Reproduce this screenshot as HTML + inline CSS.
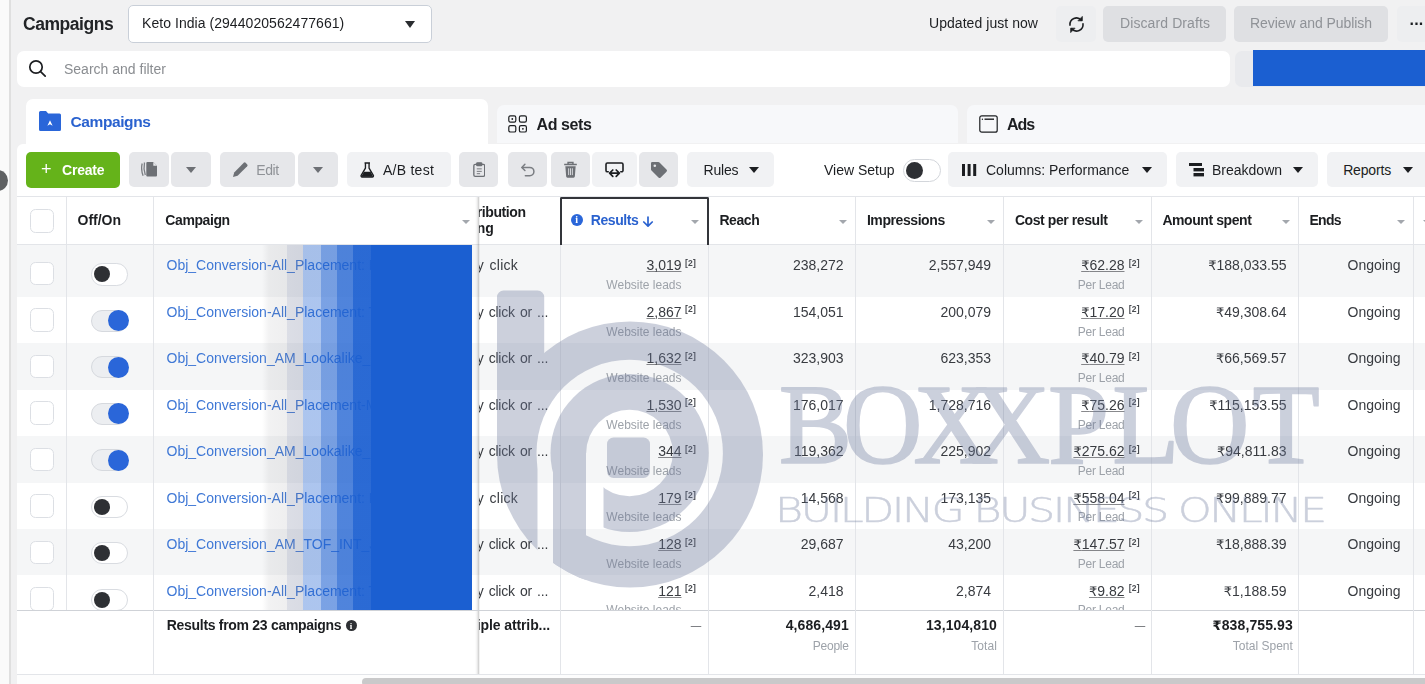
<!DOCTYPE html>
<html lang="en">
<head>
<meta charset="utf-8">
<title>Campaigns</title>
<style>
*{box-sizing:border-box;margin:0;padding:0}
html,body{width:1425px;height:684px;overflow:hidden}
body{background:#f1f1f2;font-family:"Liberation Sans","DejaVu Sans",sans-serif;font-size:14px;color:#1c1e21;position:relative}
#root{position:absolute;left:0;top:0;width:1425px;height:684px;overflow:hidden;opacity:.999;will-change:opacity}
.abs{position:absolute}
.t{position:absolute;white-space:nowrap;line-height:1}
.b{font-weight:bold}
.ru{font-family:"DejaVu Sans",sans-serif;font-size:.93em}
u{text-decoration:underline;text-underline-offset:1px;text-decoration-thickness:1px;text-decoration-color:rgba(56,59,64,.6)}
/* left gutter */
#gut{left:0;top:0;width:11px;height:684px;background:#fafafa;border-right:2px solid #dfdfdf}
#knob{left:-13px;top:170px;width:21px;height:21px;border-radius:50%;background:#5f6163}
/* top bar */
#sel{left:128px;top:5.300px;width:304px;height:37.300px;background:#fff;border:1px solid #c9cfd8;border-radius:5px}
.btn{position:absolute;border-radius:5px;background:#e6e7ea}
.btn.dis{background:#dfe0e3}
.caret{position:absolute;width:0;height:0;border-left:5px solid transparent;border-right:5px solid transparent;border-top:6px solid #1c1e21}
/* search */
#search{left:17px;top:51px;width:1213px;height:36px;background:#fff;border-radius:7px}
#sbox2{left:1235px;top:51px;width:200px;height:36px;background:#e9eaed;border-radius:7px}
#blue{left:1253px;top:50px;width:172px;height:36px;background:#1b5fd1}
/* tabs */
.tab{position:absolute;border-radius:7px 7px 0 0}
#tab1{left:26px;top:99px;width:462px;height:50px;background:#fff}
#tab2{left:497px;top:105px;width:461px;height:38px;background:#f7f8fa}
#tab3{left:967px;top:105px;width:470px;height:38px;background:#f7f8fa}
#panel{left:17px;top:144px;width:1410px;height:540px;background:#fff;border-radius:6px 0 0 0}
</style>
</head>
<body>
<div id="root">
<div class="abs" id="gut"></div>
<div class="abs" id="knob"></div>

<!-- top bar -->
<div class="t b" style="left:23px;top:15.600px;font-size:17.500px;letter-spacing:-0.45px;color:#222427">Campaigns</div>
<div class="abs" id="sel">
  <div class="t" style="left:13px;top:9.900px;font-size:14px;letter-spacing:0.05px">Keto India (2944020562477661)</div>
  <div class="caret" style="left:275.700px;top:14.600px;border-left-width:5.300px;border-right-width:5.300px;border-top-width:7px;border-top-color:#2a2c30"></div>
</div>
<div class="t" style="left:929px;top:16.300px;font-size:14px;letter-spacing:0.05px">Updated just now</div>
<div class="btn" style="left:1056px;top:6px;width:40px;height:36px;background:#edeef0">
  <svg class="abs" style="left:10.500px;top:8.500px" width="19" height="19" viewBox="0 0 19 19" fill="none" stroke="#1c1e21" stroke-width="1.600" stroke-linecap="round"><path d="M3 10.200A6.500 6.500 0 0 1 14.300 5.200"/><path d="M16 8.800A6.500 6.500 0 0 1 4.700 13.800"/><path d="M15.300 1.800v4h-4z" fill="#1c1e21" stroke-width=".8" stroke-linejoin="round"/><path d="M3.700 17.200v-4h4z" fill="#1c1e21" stroke-width=".8" stroke-linejoin="round"/></svg>
</div>
<div class="btn dis" style="left:1103px;top:6px;width:123px;height:36px"><div class="t" style="left:17px;top:10.300px;font-size:14px;color:#8f9297;letter-spacing:0.1px">Discard Drafts</div></div>
<div class="btn dis" style="left:1234px;top:6px;width:154px;height:36px"><div class="t" style="left:16px;top:10.300px;font-size:14px;color:#8f9297;letter-spacing:-0.05px">Review and Publish</div></div>
<div class="btn" style="left:1397px;top:6px;width:40px;height:36px;background:#edeef0"><div class="t b" style="left:12.500px;top:5.800px;font-size:16px;letter-spacing:0.2px">...</div></div>

<!-- search row -->
<div class="abs" id="search">
  <svg class="abs" style="left:11px;top:8.400px" width="20" height="20" viewBox="0 0 20 20" fill="none" stroke="#1c1e21" stroke-width="1.7" stroke-linecap="round"><circle cx="8" cy="8" r="6.2"/><path d="M12.6 12.6l4.6 4.6"/></svg>
  <div class="t" style="left:47px;top:10.500px;font-size:14px;color:#8a8d91;letter-spacing:0px">Search and filter</div>
</div>
<div class="abs" id="sbox2"></div>
<div class="abs" id="blue"></div>

<!-- tabs -->
<div class="tab" id="tab1"></div>
<div class="tab" id="tab2"></div>
<div class="tab" id="tab3"></div>
<div class="abs" id="panel"></div>

<svg class="abs" style="left:39px;top:111px" width="22" height="20" viewBox="0 0 22 20"><path d="M1.5 0H7l2.2 2.6H20.5A1.5 1.5 0 0 1 22 4.1V18.5A1.5 1.5 0 0 1 20.5 20H1.5A1.5 1.5 0 0 1 0 18.5V1.5A1.5 1.5 0 0 1 1.5 0Z" fill="#2a66d9"/><path d="M11 9.2l2.6 5.6-2.6-1.5-2.6 1.5z" fill="#fff"/></svg>
<div class="t b" style="top:114.2px;font-size:15.5px;left:70.5px;color:#2a62cf;letter-spacing:-0.4px;">Campaigns</div>
<svg class="abs" style="left:508px;top:115px" width="20" height="18" viewBox="0 0 20 18" fill="none" stroke="#1c1e21" stroke-width="1.2"><rect x=".8" y=".8" width="7" height="6.4" rx="1.6"/><rect x="11.4" y=".8" width="7" height="6.4" rx="1.6"/><rect x=".8" y="10.6" width="7" height="6.4" rx="1.6"/><rect x="11.4" y="10.6" width="7" height="6.4" rx="1.6"/><circle cx="4.3" cy="4" r=".9" fill="#1c1e21" stroke="none"/><circle cx="14.9" cy="13.8" r=".9" fill="#1c1e21" stroke="none"/></svg>
<div class="t b" style="top:116.5px;font-size:16px;left:536.5px;color:#1c1e21;letter-spacing:-0.4px;">Ad sets</div>
<svg class="abs" style="left:979px;top:115px" width="19" height="18" viewBox="0 0 19 18" fill="none" stroke="#1c1e21" stroke-width="1.2"><rect x=".8" y=".8" width="17.4" height="16.4" rx="2"/><path d="M5.5 4.2h9.5" stroke-width="1.4"/><circle cx="3.4" cy="4.2" r=".7" fill="#1c1e21" stroke="none"/></svg>
<div class="t b" style="top:116.5px;font-size:16px;left:1007.0px;color:#1c1e21;letter-spacing:-1.0px;">Ads</div>

<div class="btn" style="left:26px;top:152px;width:94px;height:36px;background:#65b31a"></div>
<div class="t" style="top:160.3px;font-size:18px;left:41.0px;color:#fff;">+</div>
<div class="t b" style="top:163.1px;font-size:14px;left:62.0px;color:#fff;letter-spacing:-0.2px;">Create</div>
<div class="btn" style="left:129px;top:152px;width:39.5px;height:35.2px;background:#e6e7ea"><svg class="abs" style="left:12px;top:9px" width="17" height="17" viewBox="0 0 17 17"><path d="M1.2 2.5c-.9 3.5-.9 7.5.9 12.2" fill="none" stroke="#7b7e83" stroke-width="1.3"/><path d="M3.5 1.5c-.8 3.8-.6 8 .8 12.5" fill="none" stroke="#7b7e83" stroke-width="1.3"/><path d="M6.3 1h6l3.7 3.7v9.8a1 1 0 0 1-1 1H6.3a1 1 0 0 1-1-1V2a1 1 0 0 1 1-1z" fill="#6d7075"/><path d="M12.3 1v3.7H16z" fill="#e6e7ea"/></svg></div>
<div class="btn" style="left:171px;top:152px;width:39.5px;height:35.2px;background:#e6e7ea"></div>
<div class="abs" style="left:186px;top:166.5px;width:0;height:0;border-left:5.0px solid transparent;border-right:5.0px solid transparent;border-top:6px solid #6d7075"></div>
<div class="btn" style="left:220px;top:152px;width:75px;height:35.2px;background:#e6e7ea"><svg class="abs" style="left:12px;top:9px" width="17" height="17" viewBox="0 0 17 17"><path d="M1 16l1.2-4.6L11.8 1.8a1.3 1.3 0 0 1 1.8 0l1.6 1.6a1.3 1.3 0 0 1 0 1.8L5.6 14.8z" fill="#6d7075"/></svg></div>
<div class="t" style="top:163.1px;font-size:14px;left:256.2px;color:#8f9297;letter-spacing:-0.4px;">Edit</div>
<div class="btn" style="left:298px;top:152px;width:40px;height:35.2px;background:#e6e7ea"></div>
<div class="abs" style="left:313px;top:166.5px;width:0;height:0;border-left:5.0px solid transparent;border-right:5.0px solid transparent;border-top:6px solid #6d7075"></div>
<div class="btn" style="left:347px;top:152px;width:104px;height:35.2px;background:#f1f2f4"><svg class="abs" style="left:13px;top:9.500px" width="14.500" height="16" viewBox="0 0 16 17"><path d="M5 .8h6M6 .8v5.6L1.3 14.4a1.2 1.2 0 0 0 1 1.8h11.4a1.2 1.2 0 0 0 1-1.8L10 6.4V.8" fill="none" stroke="#1c1e21" stroke-width="1.5" stroke-linejoin="round"/><path d="M4.4 10.5h7.2l2.6 4.6a.6.6 0 0 1-.5.9H2.3a.6.6 0 0 1-.5-.9z" fill="#1c1e21"/></svg></div>
<div class="t" style="top:163.1px;font-size:14px;left:383.0px;color:#1c1e21;letter-spacing:0.25px;">A/B test</div>
<div class="btn" style="left:459px;top:152px;width:39px;height:35.2px;background:#e6e7ea"><svg class="abs" style="left:13.800px;top:10.300px" width="12.500" height="15.400" viewBox="0 0 15 18" fill="none" stroke="#6d7075" stroke-width="1.600"><rect x="1" y="2.6" width="13" height="14.4" rx="1.6"/><rect x="4.5" y=".8" width="6" height="3.4" rx=".8" fill="#6d7075"/><path d="M4.5 8h6M4.5 11h6M4.5 13.8h4" stroke-width="1.1"/></svg></div>
<div class="btn" style="left:508px;top:152px;width:39px;height:35.2px;background:#e6e7ea"><svg class="abs" style="left:11.500px;top:11px" width="16" height="15" viewBox="0 0 18 17" fill="none" stroke="#7a7d82" stroke-width="1.700" stroke-linecap="round" stroke-linejoin="round"><path d="M5.5 1.5L2 5l3.5 3.5"/><path d="M2.5 5H11a4.7 4.7 0 0 1 0 9.4H6"/></svg></div>
<div class="btn" style="left:551px;top:152px;width:39px;height:35.2px;background:#e6e7ea"><svg class="abs" style="left:12px;top:9px" width="15" height="17.500" viewBox="0 0 15 18"><path d="M1 3.6h13M5 3.4V1.5h5v1.9" fill="none" stroke="#6d7075" stroke-width="1.5"/><path d="M2.2 5.4h10.6l-.8 10.4a1.4 1.4 0 0 1-1.4 1.3H4.4A1.4 1.4 0 0 1 3 15.8z" fill="#6d7075"/><path d="M5.6 7.5v7M7.5 7.5v7M9.4 7.5v7" stroke="#e6e7ea" stroke-width=".9"/></svg></div>
<div class="btn" style="left:592px;top:152px;width:45px;height:35.2px;background:#f1f2f4"><svg class="abs" style="left:13px;top:9.500px" width="19" height="17" viewBox="0 0 19 17" fill="none" stroke="#1c1e21" stroke-width="1.600" stroke-linejoin="round" stroke-linecap="round"><path d="M3.200 9.800H2.400A1.400 1.400 0 0 1 1 8.400V2.400A1.400 1.400 0 0 1 2.400 1h14.200A1.400 1.400 0 0 1 18 2.400v6a1.400 1.400 0 0 1-1.400 1.400h-.8"/><path d="M7.800 8L4.600 11.200l3.200 3.200M5 11.200h9M11.200 8l3.200 3.200-3.200 3.200" stroke-width="1.700"/></svg></div>
<div class="btn" style="left:639px;top:152px;width:39px;height:35.2px;background:#e6e7ea"><svg class="abs" style="left:11px;top:9px" width="18" height="18" viewBox="0 0 18 18"><path d="M1 2.2A1.2 1.2 0 0 1 2.2 1h6.2a1.6 1.6 0 0 1 1.1.5l7 7a1.6 1.6 0 0 1 0 2.2l-5.800 5.8a1.6 1.6 0 0 1-2.2 0l-7-7A1.6 1.6 0 0 1 1 8.400z" fill="#6d7075"/><circle cx="4.800" cy="4.800" r="1.300" fill="#e6e7ea"/></svg></div>
<div class="btn" style="left:687px;top:152px;width:87px;height:35.2px;background:#f1f2f4"></div>
<div class="t" style="top:163.1px;font-size:14px;left:703.5px;color:#1c1e21;letter-spacing:-0.2px;">Rules</div>
<div class="abs" style="left:749px;top:166.5px;width:0;height:0;border-left:5.75px solid transparent;border-right:5.75px solid transparent;border-top:6.5px solid #1c1e21"></div>
<div class="t" style="top:163.1px;font-size:14px;left:824.0px;color:#1c1e21;">View Setup</div>
<div class="abs" style="left:903px;top:158.500px;width:38px;height:23px;border-radius:12px;background:#fff;border:1px solid #d3d6db"></div>
<div class="abs" style="left:905.5px;top:161.500px;width:17px;height:17px;border-radius:50%;background:#2e3034"></div>
<div class="btn" style="left:948px;top:152px;width:219px;height:35.2px;background:#f1f2f4"></div>
<div class="abs" style="left:961.500px;top:163.500px;width:3.600px;height:12px;background:#1c1e21;box-shadow:5.600px 0 0 #1c1e21,11.200px 0 0 #1c1e21"></div>
<div class="t" style="top:163.1px;font-size:14px;left:986.0px;color:#1c1e21;">Columns: Performance</div>
<div class="abs" style="left:1141.5px;top:166.5px;width:0;height:0;border-left:5.75px solid transparent;border-right:5.75px solid transparent;border-top:6.5px solid #1c1e21"></div>
<div class="btn" style="left:1176px;top:152px;width:142px;height:35.2px;background:#f1f2f4"><svg class="abs" style="left:12.500px;top:10.500px" width="15" height="14" viewBox="0 0 15 14" fill="#1c1e21"><rect x="0" y="0" width="13" height="3"/><rect x="4.500" y="5" width="10.500" height="3.400"/><rect x="4.500" y="10" width="10.500" height="3.400"/></svg></div>
<div class="t" style="top:163.1px;font-size:14px;left:1212.0px;color:#1c1e21;">Breakdown</div>
<div class="abs" style="left:1292.5px;top:166.5px;width:0;height:0;border-left:5.75px solid transparent;border-right:5.75px solid transparent;border-top:6.5px solid #1c1e21"></div>
<div class="btn" style="left:1327px;top:152px;width:113px;height:35.2px;background:#f1f2f4"></div>
<div class="t" style="top:163.1px;font-size:14px;left:1343.2px;color:#1c1e21;letter-spacing:-0.18px;">Reports</div>
<div class="abs" style="left:1402.5px;top:166.5px;width:0;height:0;border-left:5.75px solid transparent;border-right:5.75px solid transparent;border-top:6.5px solid #1c1e21"></div>

<div class="abs" style="left:17px;top:245px;width:1410px;height:51.67px;background:#f5f6f7"></div>
<div class="abs" style="left:17px;top:343.14px;width:1410px;height:46.47px;background:#f5f6f7"></div>
<div class="abs" style="left:17px;top:436.08px;width:1410px;height:46.47px;background:#f5f6f7"></div>
<div class="abs" style="left:17px;top:529.02px;width:1410px;height:46.47px;background:#f5f6f7"></div>
<div class="abs" style="left:17px;top:196px;width:1410px;height:1px;background:#e3e5e9"></div>
<div class="abs" style="left:17px;top:244px;width:1410px;height:1px;background:#e3e5e9"></div>
<div class="abs" style="left:66.0px;top:196px;width:1px;height:414px;background:#e3e5e9"></div>
<div class="abs" style="left:153.0px;top:196px;width:1px;height:478px;background:#e3e5e9"></div>
<div class="abs" style="left:560.0px;top:196px;width:1px;height:478px;background:#e3e5e9"></div>
<div class="abs" style="left:708.0px;top:196px;width:1px;height:478px;background:#e3e5e9"></div>
<div class="abs" style="left:855.0px;top:196px;width:1px;height:478px;background:#e3e5e9"></div>
<div class="abs" style="left:1003.0px;top:196px;width:1px;height:478px;background:#e3e5e9"></div>
<div class="abs" style="left:1151.0px;top:196px;width:1px;height:478px;background:#e3e5e9"></div>
<div class="abs" style="left:1298.0px;top:196px;width:1px;height:478px;background:#e3e5e9"></div>
<div class="abs" style="left:1413.0px;top:196px;width:1px;height:478px;background:#e3e5e9"></div>
<div class="t b" style="top:213.1px;font-size:14px;left:77.5px;">Off/On</div>
<div class="t b" style="top:213.1px;font-size:14px;left:165.3px;letter-spacing:-0.4px;">Campaign</div>
<div class="t b" style="top:213.1px;font-size:14px;left:719.4px;letter-spacing:-0.42px;">Reach</div>
<div class="abs" style="left:839.0px;top:219.5px;width:0;height:0;border-left:4.25px solid transparent;border-right:4.25px solid transparent;border-top:4.5px solid #a3a7ad"></div>
<div class="t b" style="top:213.1px;font-size:14px;left:866.9px;letter-spacing:-0.42px;">Impressions</div>
<div class="abs" style="left:986.5px;top:219.5px;width:0;height:0;border-left:4.25px solid transparent;border-right:4.25px solid transparent;border-top:4.5px solid #a3a7ad"></div>
<div class="t b" style="top:213.1px;font-size:14px;left:1014.9px;letter-spacing:-0.42px;">Cost per result</div>
<div class="abs" style="left:1135.0px;top:219.5px;width:0;height:0;border-left:4.25px solid transparent;border-right:4.25px solid transparent;border-top:4.5px solid #a3a7ad"></div>
<div class="t b" style="top:213.1px;font-size:14px;left:1162.4px;letter-spacing:-0.42px;">Amount spent</div>
<div class="abs" style="left:1281.5px;top:219.5px;width:0;height:0;border-left:4.25px solid transparent;border-right:4.25px solid transparent;border-top:4.5px solid #a3a7ad"></div>
<div class="t b" style="top:213.1px;font-size:14px;left:1309.4px;letter-spacing:-0.7px;">Ends</div>
<div class="abs" style="left:1396.5px;top:219.5px;width:0;height:0;border-left:4.25px solid transparent;border-right:4.25px solid transparent;border-top:4.5px solid #a3a7ad"></div>
<div class="abs" style="left:462px;top:219.5px;width:0;height:0;border-left:4.25px solid transparent;border-right:4.25px solid transparent;border-top:4.5px solid #a3a7ad"></div>
<div class="abs" style="left:1423px;top:219.5px;width:0;height:0;border-left:4.25px solid transparent;border-right:4.25px solid transparent;border-top:4.5px solid #a3a7ad"></div>
<div class="abs" style="left:560px;top:197px;width:149px;height:48px;border:2px solid #33353a;border-bottom:0;border-radius:2px 2px 0 0"></div>
<div class="abs" style="left:570.500px;top:213.500px;width:12.500px;height:12.500px;border-radius:50%;background:#2a66d9"></div>
<div class="t b" style="top:215.1px;font-size:10px;left:575.3px;color:#fff;font-family:'Liberation Serif',serif;">i</div>
<div class="t b" style="top:213.1px;font-size:14px;left:590.8px;color:#2a62cf;letter-spacing:-0.45px;">Results</div>
<svg class="abs" style="left:641.500px;top:213px" width="12" height="14" viewBox="0 0 12 14" fill="none" stroke="#2a62cf" stroke-width="1.700" stroke-linecap="round" stroke-linejoin="round"><path d="M6 4v8.800M1.800 9L6 13.200l4.200-4.200"/></svg>
<div class="abs" style="left:691px;top:219.5px;width:0;height:0;border-left:4.25px solid transparent;border-right:4.25px solid transparent;border-top:4.5px solid #a3a7ad"></div>
<div class="abs" style="left:30px;top:209.1px;width:24px;height:23.500px;border:1px solid #dcdfe4;border-radius:5.500px;background:#fff"></div>
<div class="abs" style="left:30px;top:261.7px;width:24px;height:23.500px;border:1px solid #dcdfe4;border-radius:5.500px;background:#fff"></div>
<div class="abs" style="left:90.500px;top:263.2px;width:37.500px;height:22.400px;border-radius:11.200px;background:#fff;border:1px solid #d9dce1"></div>
<div class="abs" style="left:93.500px;top:266.2px;width:16px;height:16px;border-radius:50%;background:#2e3034"></div>
<div class="t" style="top:258.3px;font-size:14px;left:166.5px;color:#3f78d6;">Obj_Conversion-All_Placement: M</div>
<div class="t" style="top:258.3px;font-size:14px;left:476.7px;color:#383b40;letter-spacing:0.25px;word-spacing:1.500px;clip-path:inset(-6px -6px -6px 2.300px);">y click</div>
<div class="t" style="top:258.3px;font-size:14px;right:743.5px;color:#383b40;"><u>3,019</u></div>
<div class="t b" style="top:258.8px;font-size:8.5px;left:685.0px;color:#4a4d52;letter-spacing:0.2px;">[2]</div>
<div class="t" style="top:279.0px;font-size:12px;right:743.5px;color:#9da2a9;">Website leads</div>
<div class="t" style="top:258.3px;font-size:14px;right:581.5px;color:#383b40;">238,272</div>
<div class="t" style="top:258.3px;font-size:14px;right:434.0px;color:#383b40;">2,557,949</div>
<div class="t" style="top:258.3px;font-size:14px;right:300.5px;color:#383b40;"><u><span class="ru">&#8377;</span>62.28</u></div>
<div class="t b" style="top:258.8px;font-size:8.5px;left:1128.8px;color:#4a4d52;letter-spacing:0.2px;">[2]</div>
<div class="t" style="top:279.0px;font-size:12px;right:300.5px;color:#9da2a9;letter-spacing:-0.25px;">Per Lead</div>
<div class="t" style="top:258.3px;font-size:14px;right:138.5px;color:#383b40;"><span class="ru">&#8377;</span>188,033.55</div>
<div class="t" style="top:258.3px;font-size:14px;right:24.5px;color:#383b40;">Ongoing</div>
<div class="abs" style="left:30px;top:308.2px;width:24px;height:23.500px;border:1px solid #dcdfe4;border-radius:5.500px;background:#fff"></div>
<div class="abs" style="left:90.500px;top:309.7px;width:37.500px;height:22.400px;border-radius:11.200px;background:#eceef1;border:1px solid #d6d9de"></div>
<div class="abs" style="left:107.500px;top:310.2px;width:21px;height:21px;border-radius:50%;background:#2a66d9"></div>
<div class="t" style="top:304.8px;font-size:14px;left:166.5px;color:#3f78d6;">Obj_Conversion-All_Placement: T</div>
<div class="t" style="top:304.8px;font-size:14px;left:476.7px;color:#383b40;letter-spacing:-0.22px;word-spacing:1.500px;clip-path:inset(-6px -6px -6px 2.300px);">y click or ...</div>
<div class="t" style="top:304.8px;font-size:14px;right:743.5px;color:#383b40;"><u>2,867</u></div>
<div class="t b" style="top:305.3px;font-size:8.5px;left:685.0px;color:#4a4d52;letter-spacing:0.2px;">[2]</div>
<div class="t" style="top:325.5px;font-size:12px;right:743.5px;color:#9da2a9;">Website leads</div>
<div class="t" style="top:304.8px;font-size:14px;right:581.5px;color:#383b40;">154,051</div>
<div class="t" style="top:304.8px;font-size:14px;right:434.0px;color:#383b40;">200,079</div>
<div class="t" style="top:304.8px;font-size:14px;right:300.5px;color:#383b40;"><u><span class="ru">&#8377;</span>17.20</u></div>
<div class="t b" style="top:305.3px;font-size:8.5px;left:1128.8px;color:#4a4d52;letter-spacing:0.2px;">[2]</div>
<div class="t" style="top:325.5px;font-size:12px;right:300.5px;color:#9da2a9;letter-spacing:-0.25px;">Per Lead</div>
<div class="t" style="top:304.8px;font-size:14px;right:138.5px;color:#383b40;"><span class="ru">&#8377;</span>49,308.64</div>
<div class="t" style="top:304.8px;font-size:14px;right:24.5px;color:#383b40;">Ongoing</div>
<div class="abs" style="left:30px;top:354.6px;width:24px;height:23.500px;border:1px solid #dcdfe4;border-radius:5.500px;background:#fff"></div>
<div class="abs" style="left:90.500px;top:356.1px;width:37.500px;height:22.400px;border-radius:11.200px;background:#eceef1;border:1px solid #d6d9de"></div>
<div class="abs" style="left:107.500px;top:356.6px;width:21px;height:21px;border-radius:50%;background:#2a66d9"></div>
<div class="t" style="top:351.3px;font-size:14px;left:166.5px;color:#3f78d6;">Obj_Conversion_AM_Lookalike_I</div>
<div class="t" style="top:351.3px;font-size:14px;left:476.7px;color:#383b40;letter-spacing:-0.22px;word-spacing:1.500px;clip-path:inset(-6px -6px -6px 2.300px);">y click or ...</div>
<div class="t" style="top:351.3px;font-size:14px;right:743.5px;color:#383b40;"><u>1,632</u></div>
<div class="t b" style="top:351.7px;font-size:8.5px;left:685.0px;color:#4a4d52;letter-spacing:0.2px;">[2]</div>
<div class="t" style="top:372.0px;font-size:12px;right:743.5px;color:#9da2a9;">Website leads</div>
<div class="t" style="top:351.3px;font-size:14px;right:581.5px;color:#383b40;">323,903</div>
<div class="t" style="top:351.3px;font-size:14px;right:434.0px;color:#383b40;">623,353</div>
<div class="t" style="top:351.3px;font-size:14px;right:300.5px;color:#383b40;"><u><span class="ru">&#8377;</span>40.79</u></div>
<div class="t b" style="top:351.7px;font-size:8.5px;left:1128.8px;color:#4a4d52;letter-spacing:0.2px;">[2]</div>
<div class="t" style="top:372.0px;font-size:12px;right:300.5px;color:#9da2a9;letter-spacing:-0.25px;">Per Lead</div>
<div class="t" style="top:351.3px;font-size:14px;right:138.5px;color:#383b40;"><span class="ru">&#8377;</span>66,569.57</div>
<div class="t" style="top:351.3px;font-size:14px;right:24.5px;color:#383b40;">Ongoing</div>
<div class="abs" style="left:30px;top:401.1px;width:24px;height:23.500px;border:1px solid #dcdfe4;border-radius:5.500px;background:#fff"></div>
<div class="abs" style="left:90.500px;top:402.6px;width:37.500px;height:22.400px;border-radius:11.200px;background:#eceef1;border:1px solid #d6d9de"></div>
<div class="abs" style="left:107.500px;top:403.1px;width:21px;height:21px;border-radius:50%;background:#2a66d9"></div>
<div class="t" style="top:397.8px;font-size:14px;left:166.5px;color:#3f78d6;">Obj_Conversion-All_Placement-M</div>
<div class="t" style="top:397.8px;font-size:14px;left:476.7px;color:#383b40;letter-spacing:-0.22px;word-spacing:1.500px;clip-path:inset(-6px -6px -6px 2.300px);">y click or ...</div>
<div class="t" style="top:397.8px;font-size:14px;right:743.5px;color:#383b40;"><u>1,530</u></div>
<div class="t b" style="top:398.2px;font-size:8.5px;left:685.0px;color:#4a4d52;letter-spacing:0.2px;">[2]</div>
<div class="t" style="top:418.5px;font-size:12px;right:743.5px;color:#9da2a9;">Website leads</div>
<div class="t" style="top:397.8px;font-size:14px;right:581.5px;color:#383b40;">176,017</div>
<div class="t" style="top:397.8px;font-size:14px;right:434.0px;color:#383b40;">1,728,716</div>
<div class="t" style="top:397.8px;font-size:14px;right:300.5px;color:#383b40;"><u><span class="ru">&#8377;</span>75.26</u></div>
<div class="t b" style="top:398.2px;font-size:8.5px;left:1128.8px;color:#4a4d52;letter-spacing:0.2px;">[2]</div>
<div class="t" style="top:418.5px;font-size:12px;right:300.5px;color:#9da2a9;letter-spacing:-0.25px;">Per Lead</div>
<div class="t" style="top:397.8px;font-size:14px;right:138.5px;color:#383b40;"><span class="ru">&#8377;</span>115,153.55</div>
<div class="t" style="top:397.8px;font-size:14px;right:24.5px;color:#383b40;">Ongoing</div>
<div class="abs" style="left:30px;top:447.6px;width:24px;height:23.500px;border:1px solid #dcdfe4;border-radius:5.500px;background:#fff"></div>
<div class="abs" style="left:90.500px;top:449.1px;width:37.500px;height:22.400px;border-radius:11.200px;background:#eceef1;border:1px solid #d6d9de"></div>
<div class="abs" style="left:107.500px;top:449.6px;width:21px;height:21px;border-radius:50%;background:#2a66d9"></div>
<div class="t" style="top:444.2px;font-size:14px;left:166.5px;color:#3f78d6;">Obj_Conversion_AM_Lookalike_I</div>
<div class="t" style="top:444.2px;font-size:14px;left:476.7px;color:#383b40;letter-spacing:-0.22px;word-spacing:1.500px;clip-path:inset(-6px -6px -6px 2.300px);">y click or ...</div>
<div class="t" style="top:444.2px;font-size:14px;right:743.5px;color:#383b40;"><u>344</u></div>
<div class="t b" style="top:444.7px;font-size:8.5px;left:685.0px;color:#4a4d52;letter-spacing:0.2px;">[2]</div>
<div class="t" style="top:464.9px;font-size:12px;right:743.5px;color:#9da2a9;">Website leads</div>
<div class="t" style="top:444.2px;font-size:14px;right:581.5px;color:#383b40;">119,362</div>
<div class="t" style="top:444.2px;font-size:14px;right:434.0px;color:#383b40;">225,902</div>
<div class="t" style="top:444.2px;font-size:14px;right:300.5px;color:#383b40;"><u><span class="ru">&#8377;</span>275.62</u></div>
<div class="t b" style="top:444.7px;font-size:8.5px;left:1128.8px;color:#4a4d52;letter-spacing:0.2px;">[2]</div>
<div class="t" style="top:464.9px;font-size:12px;right:300.5px;color:#9da2a9;letter-spacing:-0.25px;">Per Lead</div>
<div class="t" style="top:444.2px;font-size:14px;right:138.5px;color:#383b40;"><span class="ru">&#8377;</span>94,811.83</div>
<div class="t" style="top:444.2px;font-size:14px;right:24.5px;color:#383b40;">Ongoing</div>
<div class="abs" style="left:30px;top:494.0px;width:24px;height:23.500px;border:1px solid #dcdfe4;border-radius:5.500px;background:#fff"></div>
<div class="abs" style="left:90.500px;top:495.5px;width:37.500px;height:22.400px;border-radius:11.200px;background:#fff;border:1px solid #d9dce1"></div>
<div class="abs" style="left:93.500px;top:498.5px;width:16px;height:16px;border-radius:50%;background:#2e3034"></div>
<div class="t" style="top:490.7px;font-size:14px;left:166.5px;color:#3f78d6;">Obj_Conversion-All_Placement: M</div>
<div class="t" style="top:490.7px;font-size:14px;left:476.7px;color:#383b40;letter-spacing:0.25px;word-spacing:1.500px;clip-path:inset(-6px -6px -6px 2.300px);">y click</div>
<div class="t" style="top:490.7px;font-size:14px;right:743.5px;color:#383b40;"><u>179</u></div>
<div class="t b" style="top:491.2px;font-size:8.5px;left:685.0px;color:#4a4d52;letter-spacing:0.2px;">[2]</div>
<div class="t" style="top:511.4px;font-size:12px;right:743.5px;color:#9da2a9;">Website leads</div>
<div class="t" style="top:490.7px;font-size:14px;right:581.5px;color:#383b40;">14,568</div>
<div class="t" style="top:490.7px;font-size:14px;right:434.0px;color:#383b40;">173,135</div>
<div class="t" style="top:490.7px;font-size:14px;right:300.5px;color:#383b40;"><u><span class="ru">&#8377;</span>558.04</u></div>
<div class="t b" style="top:491.2px;font-size:8.5px;left:1128.8px;color:#4a4d52;letter-spacing:0.2px;">[2]</div>
<div class="t" style="top:511.4px;font-size:12px;right:300.5px;color:#9da2a9;letter-spacing:-0.25px;">Per Lead</div>
<div class="t" style="top:490.7px;font-size:14px;right:138.5px;color:#383b40;"><span class="ru">&#8377;</span>99,889.77</div>
<div class="t" style="top:490.7px;font-size:14px;right:24.5px;color:#383b40;">Ongoing</div>
<div class="abs" style="left:30px;top:540.5px;width:24px;height:23.500px;border:1px solid #dcdfe4;border-radius:5.500px;background:#fff"></div>
<div class="abs" style="left:90.500px;top:542.0px;width:37.500px;height:22.400px;border-radius:11.200px;background:#fff;border:1px solid #d9dce1"></div>
<div class="abs" style="left:93.500px;top:545.0px;width:16px;height:16px;border-radius:50%;background:#2e3034"></div>
<div class="t" style="top:537.2px;font-size:14px;left:166.5px;color:#3f78d6;">Obj_Conversion_AM_TOF_INT_J</div>
<div class="t" style="top:537.2px;font-size:14px;left:476.7px;color:#383b40;letter-spacing:-0.22px;word-spacing:1.500px;clip-path:inset(-6px -6px -6px 2.300px);">y click or ...</div>
<div class="t" style="top:537.2px;font-size:14px;right:743.5px;color:#383b40;"><u>128</u></div>
<div class="t b" style="top:537.6px;font-size:8.5px;left:685.0px;color:#4a4d52;letter-spacing:0.2px;">[2]</div>
<div class="t" style="top:557.9px;font-size:12px;right:743.5px;color:#9da2a9;">Website leads</div>
<div class="t" style="top:537.2px;font-size:14px;right:581.5px;color:#383b40;">29,687</div>
<div class="t" style="top:537.2px;font-size:14px;right:434.0px;color:#383b40;">43,200</div>
<div class="t" style="top:537.2px;font-size:14px;right:300.5px;color:#383b40;"><u><span class="ru">&#8377;</span>147.57</u></div>
<div class="t b" style="top:537.6px;font-size:8.5px;left:1128.8px;color:#4a4d52;letter-spacing:0.2px;">[2]</div>
<div class="t" style="top:557.9px;font-size:12px;right:300.5px;color:#9da2a9;letter-spacing:-0.25px;">Per Lead</div>
<div class="t" style="top:537.2px;font-size:14px;right:138.5px;color:#383b40;"><span class="ru">&#8377;</span>18,888.39</div>
<div class="t" style="top:537.2px;font-size:14px;right:24.5px;color:#383b40;">Ongoing</div>
<div class="abs" style="left:30px;top:587.0px;width:24px;height:23.500px;border:1px solid #dcdfe4;border-radius:5.500px;background:#fff"></div>
<div class="abs" style="left:90.500px;top:588.5px;width:37.500px;height:22.400px;border-radius:11.200px;background:#fff;border:1px solid #d9dce1"></div>
<div class="abs" style="left:93.500px;top:591.5px;width:16px;height:16px;border-radius:50%;background:#2e3034"></div>
<div class="t" style="top:583.6px;font-size:14px;left:166.5px;color:#3f78d6;">Obj_Conversion-All_Placement: T</div>
<div class="t" style="top:583.6px;font-size:14px;left:476.7px;color:#383b40;letter-spacing:-0.22px;word-spacing:1.500px;clip-path:inset(-6px -6px -6px 2.300px);">y click or ...</div>
<div class="t" style="top:583.6px;font-size:14px;right:743.5px;color:#383b40;"><u>121</u></div>
<div class="t b" style="top:584.1px;font-size:8.5px;left:685.0px;color:#4a4d52;letter-spacing:0.2px;">[2]</div>
<div class="t" style="top:604.3px;font-size:12px;right:743.5px;color:#9da2a9;">Website leads</div>
<div class="t" style="top:583.6px;font-size:14px;right:581.5px;color:#383b40;">2,418</div>
<div class="t" style="top:583.6px;font-size:14px;right:434.0px;color:#383b40;">2,874</div>
<div class="t" style="top:583.6px;font-size:14px;right:300.5px;color:#383b40;"><u><span class="ru">&#8377;</span>9.82</u></div>
<div class="t b" style="top:584.1px;font-size:8.5px;left:1128.8px;color:#4a4d52;letter-spacing:0.2px;">[2]</div>
<div class="t" style="top:604.3px;font-size:12px;right:300.5px;color:#9da2a9;letter-spacing:-0.25px;">Per Lead</div>
<div class="t" style="top:583.6px;font-size:14px;right:138.5px;color:#383b40;"><span class="ru">&#8377;</span>1,188.59</div>
<div class="t" style="top:583.6px;font-size:14px;right:24.5px;color:#383b40;">Ongoing</div>
<div class="abs" style="left:262px;top:245px;width:210px;height:365px;background:linear-gradient(90deg,rgba(130,130,135,0) 0px,rgba(130,130,135,.10) 7px,rgba(130,130,135,.13) 25px,rgba(95,105,140,.22) 25px,rgba(95,105,140,.24) 41px,rgba(27,95,209,.36) 41px,rgba(27,95,209,.36) 59px,rgba(27,95,209,.58) 59px,rgba(27,95,209,.58) 75px,rgba(27,95,209,.77) 75px,rgba(27,95,209,.77) 91px,rgba(27,95,209,.93) 91px,rgba(27,95,209,.93) 109px,rgb(27,95,209) 109px)"></div>
<div class="abs" style="left:475px;top:197px;width:6px;height:413px;background:linear-gradient(90deg,rgba(0,0,0,0) 0,rgba(0,0,0,.05) 2px,rgba(0,0,0,.17) 3.500px,rgba(0,0,0,.05) 4.500px,rgba(0,0,0,0) 5.500px)"></div>
<div class="t b" style="top:204.6px;font-size:14px;left:476.7px;letter-spacing:-0.4px;clip-path:inset(-6px -6px -6px 2.300px);">ribution</div>
<div class="t b" style="top:220.6px;font-size:14px;left:476.7px;letter-spacing:-0.1px;clip-path:inset(-6px -6px -6px 2.300px);">ng</div>
<div class="abs" style="left:17px;top:610px;width:1410px;height:64px;background:#fff"></div>
<div class="abs" style="left:17px;top:610px;width:1410px;height:1px;background:#cfd2d7"></div>
<div class="abs" style="left:17px;top:674px;width:1410px;height:1px;background:#e3e5e9"></div>
<div class="abs" style="left:153.0px;top:610px;width:1px;height:64px;background:#e3e5e9"></div>
<div class="abs" style="left:560.0px;top:610px;width:1px;height:64px;background:#e3e5e9"></div>
<div class="abs" style="left:708.0px;top:610px;width:1px;height:64px;background:#e3e5e9"></div>
<div class="abs" style="left:855.0px;top:610px;width:1px;height:64px;background:#e3e5e9"></div>
<div class="abs" style="left:1003.0px;top:610px;width:1px;height:64px;background:#e3e5e9"></div>
<div class="abs" style="left:1151.0px;top:610px;width:1px;height:64px;background:#e3e5e9"></div>
<div class="abs" style="left:1298.0px;top:610px;width:1px;height:64px;background:#e3e5e9"></div>
<div class="abs" style="left:1413.0px;top:610px;width:1px;height:64px;background:#e3e5e9"></div>
<div class="abs" style="left:475px;top:611px;width:6px;height:63px;background:linear-gradient(90deg,rgba(0,0,0,0) 0,rgba(0,0,0,.05) 2px,rgba(0,0,0,.17) 3.500px,rgba(0,0,0,.05) 4.500px,rgba(0,0,0,0) 5.500px)"></div>
<div class="t b" style="top:618.4px;font-size:14px;left:166.8px;letter-spacing:-0.3px;">Results from 23 campaigns</div>
<div class="abs" style="left:345.500px;top:620.300px;width:11px;height:11px;border-radius:50%;background:#2e3034"></div>
<div class="t b" style="top:621.5px;font-size:9px;left:349.8px;color:#fff;font-family:'Liberation Serif',serif;">i</div>
<div class="t b" style="top:618.4px;font-size:14px;left:476.7px;letter-spacing:-0.1px;clip-path:inset(-6px -6px -6px 2.300px);">iple attrib...</div>
<div class="t" style="top:620.2px;font-size:10.5px;right:723.7px;color:#55585d;">&mdash;</div>
<div class="t b" style="top:618.4px;font-size:14px;right:576.2px;letter-spacing:0.1px;">4,686,491</div>
<div class="t" style="top:639.8px;font-size:12px;right:576.2px;color:#9da2a9;letter-spacing:-0.2px;">People</div>
<div class="t b" style="top:618.4px;font-size:14px;right:428.0px;letter-spacing:0.1px;">13,104,810</div>
<div class="t" style="top:639.8px;font-size:12px;right:428.0px;color:#9da2a9;letter-spacing:0.1px;">Total</div>
<div class="t" style="top:620.2px;font-size:10.5px;right:279.8px;color:#55585d;">&mdash;</div>
<div class="t b" style="top:618.4px;font-size:14px;right:132.2px;letter-spacing:0.1px;"><span class="ru">&#8377;</span>838,755.93</div>
<div class="t" style="top:639.8px;font-size:12px;right:132.2px;color:#9da2a9;">Total Spent</div>
<div class="abs" style="left:17px;top:675px;width:1410px;height:9px;background:#fdfdfd"></div>
<div class="abs" style="left:362px;top:678px;width:1070px;height:8px;background:#c9c9ca;border-radius:4px 0 0 4px"></div>

<svg class="abs" style="left:0;top:0;pointer-events:none" width="1425" height="684" viewBox="0 0 1425 684">
<defs>
<clipPath id="cD1"><circle cx="630" cy="454.500" r="133"/></clipPath>
<mask id="mk" maskUnits="userSpaceOnUse" x="0" y="0" width="1425" height="684">
<rect x="0" y="0" width="1425" height="684" fill="#000"/>
<path d="M497 454V297a6.500 6.500 0 0 1 6.500-6.500h34.200a6.500 6.500 0 0 1 6.500 6.500V454z" fill="#fff"/>
<circle cx="630" cy="454.500" r="133" fill="#fff"/>
<rect x="537.500" y="453" width="15.500" height="160" fill="#000"/>
<circle cx="629.700" cy="453" r="93.200" fill="#000"/>
<rect x="553" y="453" width="33" height="150" fill="#fff" clip-path="url(#cD1)"/>
<circle cx="629.500" cy="453" r="79" fill="#fff"/>
<path d="M586 453h17.500v78h-8a9.500 9.500 0 0 1-9.500-9.500z" fill="#000"/>
<circle cx="629.500" cy="453" r="43.300" fill="#000"/>
<rect x="607" y="437.500" width="43" height="40.500" rx="6.500" fill="#fff"/>
</mask>
</defs>
<rect x="480" y="280" width="300" height="320" fill="#6c789b" fill-opacity=".35" mask="url(#mk)"/>
<g fill="#6c789b" stroke="#6c789b" opacity=".35" stroke-linejoin="round">
<text transform="scale(0.97,1)" x="802.8 869.1 941.4 1000.7 1080.4 1146.6 1206.3 1291.3" y="462.800" font-family="'Liberation Serif',serif" font-size="113.6" stroke-width="1.700">BOXXPLOT</text>
<text transform="scale(1.300,1)" x="596.250" y="521.600" font-family="'DejaVu Sans',sans-serif" font-weight="200" font-size="33" letter-spacing="-1.900" stroke-width=".450">BUILDING BUSINESS ONLINE</text>
</g>
</svg>

</div>
</body>
</html>
